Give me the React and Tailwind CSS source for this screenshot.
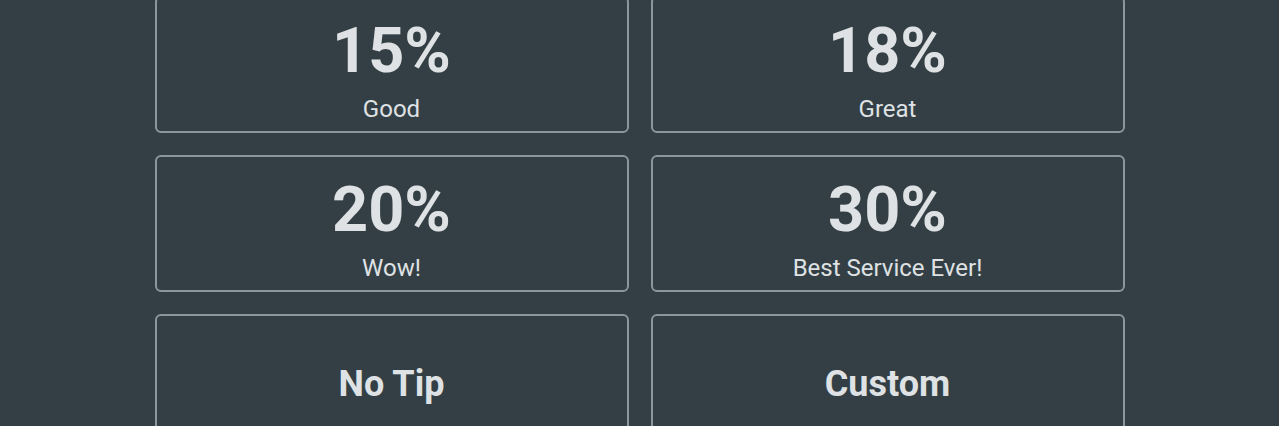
import React from "react";

const tips = [
  { pct: "15%", label: "Good" },
  { pct: "18%", label: "Great" },
  { pct: "20%", label: "Wow!" },
  { pct: "30%", label: "Best Service Ever!" },
];

export default function App() {
  return (
    <div
      className="w-full h-[426px] overflow-hidden bg-[#343f45]"
      style={{ fontFamily: "Roboto, 'Noto Sans', sans-serif" }}
    >
      <div className="w-[970px] mx-auto -mt-[4px] grid grid-cols-2 gap-x-[22px] gap-y-[22px]">
        {tips.map((t) => (
          <button
            key={t.pct}
            className="h-[137px] border-2 border-[#8a979c] rounded-[6px] flex flex-col items-center pt-[21px] text-[#dfe2e4]"
          >
            <span className="text-[63px] leading-[63px] font-bold">{t.pct}</span>
            <span className="mt-[11px] text-[24px] leading-[32px]">{t.label}</span>
          </button>
        ))}
        {["No Tip", "Custom"].map((l) => (
          <button
            key={l}
            className="h-[137px] border-2 border-[#8a979c] rounded-[6px] flex items-center justify-center pt-[2px] text-[#dfe2e4]"
          >
            <span className="text-[36px] leading-[36px] font-bold">{l}</span>
          </button>
        ))}
      </div>
    </div>
  );
}
